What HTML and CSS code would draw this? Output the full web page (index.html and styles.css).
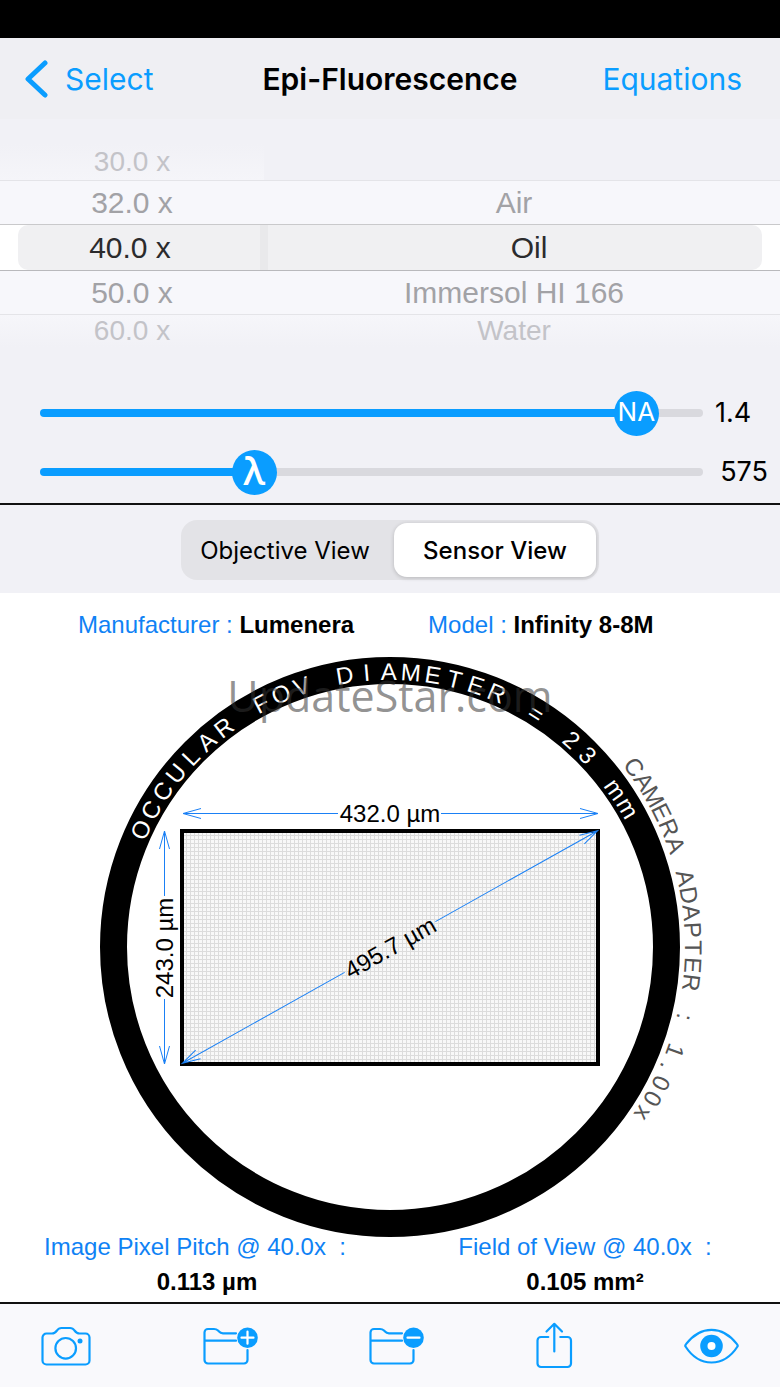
FILE: index.html
```html
<!DOCTYPE html>
<html lang="en">
<head>
    <meta charset="UTF-8">
    <meta name="viewport" content="width=device-width, initial-scale=1.0">
    <title>Epi-Fluorescence</title>
    <link rel="stylesheet" href="styles.css">
</head>
<body>
    <div class="status-bar"></div>

    <header class="navbar">
        <a class="nav-link nav-back" href="#select">
            <svg width="24" height="38" viewBox="0 0 24 38" aria-hidden="true">
                <path d="M20 3 L3 19 L20 35"/>
            </svg>
            Select
        </a>
        <h1>Epi-Fluorescence</h1>
        <a class="nav-link nav-right" href="#equations">Equations</a>
    </header>

    <main>
        <div class="picker">
            <div class="wheel wheel-power" role="radiogroup" aria-label="Magnification">
                <label class="option far"><input type="radio" name="power">30.0 x</label>
                <label class="option near"><input type="radio" name="power">32.0 x</label>
                <label class="option current"><input type="radio" name="power" checked><span>40.0 x</span></label>
                <label class="option near"><input type="radio" name="power">50.0 x</label>
                <label class="option far last"><input type="radio" name="power">60.0 x</label>
            </div>
            <div class="wheel wheel-medium" role="radiogroup" aria-label="Immersion medium">
                <div class="option far empty"></div>
                <label class="option near"><input type="radio" name="medium">Air</label>
                <label class="option current"><input type="radio" name="medium" checked><span>Oil</span></label>
                <label class="option near"><input type="radio" name="medium">Immersol HI 166</label>
                <label class="option far last"><input type="radio" name="medium">Water</label>
            </div>
        </div>

        <div class="sliders">
            <div class="slider-row">
                <div class="slider">
                    <input type="range" id="na" min="0.1" max="1.5" step="0.01" value="1.4">
                    <label class="knob" for="na">NA</label>
                </div>
                <output for="na">1.4</output>
            </div>
            <div class="slider-row">
                <div class="slider">
                    <input type="range" id="lambda" min="420" max="920" step="1" value="575">
                    <label class="knob knob-lambda" for="lambda">λ</label>
                </div>
                <output class="align-right" for="lambda">575</output>
            </div>
        </div>

        <div class="view-switch">
            <div class="segmented">
                <button type="button">Objective View</button>
                <button type="button" class="active">Sensor View</button>
            </div>
        </div>

        <section class="sensor">
            <div class="camera-info">
                <p><span>Manufacturer :</span> <b>Lumenera</b></p>
                <p><span>Model :</span> <b>Infinity 8-8M</b></p>
            </div>

            <svg class="diagram" viewBox="-390 -306 780 588">
                <defs>
                    <pattern id="pixels" width="4" height="4" patternUnits="userSpaceOnUse">
                        <rect class="pixel-fill" width="4" height="4"/>
                        <path class="pixel-line" d="M0 0.5 H4 M0.5 0 V4"/>
                    </pattern>
                </defs>

                <circle class="ring" r="276.5"/>
                <text class="arc-text ring-text" data-radius="267" data-start="-64.8" data-step="4.61">OCCULAR FOV DIAMETER = 23 mm</text>
                <text class="arc-text adapter-text" data-radius="295" data-start="53.6" data-step="3.32">CAMERA ADAPTER : 1.00x</text>

                <rect class="chip" x="-208" y="-116" width="416" height="233" fill="url(#pixels)"/>

                <!-- width -->
                <path class="dim" d="M-52 -133.5 H-207 M-189 -138.5 L-207 -133.5 L-189 -128.5 M51 -133.5 H208 M190 -138.5 L208 -133.5 L190 -128.5"/>
                <text class="dim-text" y="-125">432.0 µm</text>

                <!-- height -->
                <path class="dim" d="M-225.5 -51 V-116 M-230.5 -98 L-225.5 -116 L-220.5 -98 M-225.5 52 V117 M-230.5 99 L-225.5 117 L-220.5 99"/>
                <text class="dim-text" transform="translate(-217 1) rotate(-90)">243.0 µm</text>

                <!-- diagonal -->
                <g transform="rotate(-29.25)">
                    <path class="dim" d="M-52 0 H-238 M-220 -5 L-238 0 L-220 5 M52 0 H238 M220 -5 L238 0 L220 5"/>
                    <text class="dim-text" y="9">495.7 µm</text>
                </g>

                <text class="watermark" y="-235">UpdateStar.com</text>
            </svg>

            <dl class="readouts">
                <div class="readout readout-pitch">
                    <dt>Image Pixel Pitch @ 40.0x  :</dt>
                    <dd>0.113 µm</dd>
                </div>
                <div class="readout">
                    <dt>Field of View @ 40.0x  :</dt>
                    <dd>0.105 mm²</dd>
                </div>
            </dl>
        </section>
    </main>

    <footer class="toolbar">
        <button type="button" aria-label="Camera">
            <svg width="50" height="40" viewBox="0 0 50 40">
                <path d="M5.5 7.5 H11 C13.5 7.5 14.5 6.5 16 4.5 C17.3 2.5 18.5 2 20.5 2 H29 C31 2 32.2 2.5 33.5 4.5 C35 6.5 36 7.5 38.5 7.5 H44.5 A4 4 0 0 1 48.5 11.5 V34.5 A4 4 0 0 1 44.5 38.5 H5.5 A4 4 0 0 1 1.5 34.5 V11.5 A4 4 0 0 1 5.5 7.5 Z"/>
                <circle cx="24.7" cy="22.3" r="10.3"/>
                <circle class="solid" cx="39" cy="15" r="2.5"/>
            </svg>
        </button>
        <button type="button" aria-label="Add to folder">
            <svg width="55" height="40" viewBox="0 0 55 40">
                <path d="M33 7.3 H20 C17 7.3 16.5 6 15 4.5 C13.7 3.3 13 3 11 3 H5 A3.5 3.5 0 0 0 1.5 6.5 V34 A3.5 3.5 0 0 0 5 37.5 H41 A3.5 3.5 0 0 0 44.5 34 V24 M1.5 14.7 H33"/>
                <circle class="solid" cx="44.5" cy="11.7" r="10.3"/>
                <path class="mark" d="M38.5 11.7 H50.5 M44.5 5.7 V17.7"/>
            </svg>
        </button>
        <button type="button" aria-label="Remove from folder">
            <svg width="55" height="40" viewBox="0 0 55 40">
                <path d="M33 7.3 H20 C17 7.3 16.5 6 15 4.5 C13.7 3.3 13 3 11 3 H5 A3.5 3.5 0 0 0 1.5 6.5 V34 A3.5 3.5 0 0 0 5 37.5 H41 A3.5 3.5 0 0 0 44.5 34 V24 M1.5 14.7 H33"/>
                <circle class="solid" cx="44.5" cy="11.7" r="10.3"/>
                <path class="mark" d="M38.5 11.7 H50.5"/>
            </svg>
        </button>
        <button type="button" aria-label="Share">
            <svg width="37" height="48" viewBox="0 0 37 48">
                <path d="M12.3 15 H5 A3.5 3.5 0 0 0 1.5 18.5 V41.5 A3.5 3.5 0 0 0 5 45 H31.5 A3.5 3.5 0 0 0 35 41.5 V18.5 A3.5 3.5 0 0 0 31.5 15 H24.3 M18.3 29.5 V2 M10.5 9.5 L18.3 1.8 L26 9.5"/>
            </svg>
        </button>
        <button type="button" aria-label="Preview">
            <svg width="55" height="36" viewBox="0 0 55 36">
                <path d="M1.5 18.5 C1 17.7 1.3 17 2 16.2 C9 7 18 1.8 27.5 1.8 C37 1.8 46 7 53 16.2 C53.7 17 54 17.7 53.5 18.5 C47 28.5 38 34.5 27.5 34.5 C17 34.5 8 28.5 1.5 18.5 Z"/>
                <circle class="solid" cx="27.5" cy="18" r="11.3"/>
                <circle class="hole" cx="27.5" cy="18" r="4"/>
            </svg>
        </button>
    </footer>

    <script src="script.js"></script>
</body>
</html>
```
FILE: styles.css
```css
* {
    box-sizing: border-box;
}
body {
    margin: 0;
    min-height: 100vh;
    display: flex;
    flex-direction: column;
    background-color: #f1f1f6;
    color: #000;
    font-family: Inter, "Liberation Sans", sans-serif;
}
h1, p, dl, dd {
    margin: 0;
}
button {
    border: none;
    padding: 0;
    background: none;
    font: inherit;
    color: inherit;
    cursor: pointer;
}
.status-bar {
    height: 38px;
    background-color: #000;
}

/* navigation */
.navbar {
    display: grid;
    grid-template-columns: 1fr auto 1fr;
    align-items: center;
    height: 81px;
    padding: 0 25px;
    background-color: #efeff3;
}
.navbar h1 {
    font-size: 30px;
    font-weight: 600;
}
.nav-link {
    color: #0a9dff;
    font-size: 30px;
    text-decoration: none;
}
.nav-back {
    display: flex;
    align-items: center;
    gap: 16px;
}
.nav-back svg {
    fill: none;
    stroke: #0a9dff;
    stroke-width: 5;
    stroke-linecap: round;
    stroke-linejoin: round;
}
.nav-right {
    justify-self: end;
    padding-right: 13px;
}

/* wheel picker */
.picker {
    display: grid;
    grid-template-columns: 264px 1fr;
    padding-top: 25px;
    font-family: "Liberation Sans", Arial, sans-serif;
}
.option {
    position: relative;
    display: flex;
    align-items: center;
    justify-content: center;
    font-size: 30px;
    cursor: pointer;
}
.option input {
    position: absolute;
    opacity: 0;
}
.wheel-medium .option {
    padding-right: 16px;
}
.far {
    height: 36px;
    font-size: 28px;
    color: #c3c3c8;
    background: linear-gradient(#f1f1f6, #f5f5f9);
}
.far.empty {
    background: none;
}
.far.last {
    height: 33px;
    border-top: 1px solid #e4e4e8;
    background: linear-gradient(#f6f6fa, #f1f1f6);
}
.near {
    height: 43px;
    color: #a2a2a6;
    background-color: #f7f7fb;
}
.far + .near {
    height: 44px;
    border-top: 1px solid #e4e4e8;
}
.wheel .option.current {
    height: 47px;
    padding: 0;
    border-top: 1px solid #c9c9cb;
    border-bottom: 1px solid #b9b9bc;
    color: #2b2b2d;
    background-color: #fff;
}
.current span {
    flex: 1;
    height: 45px;
    line-height: 45px;
    text-align: center;
    background-color: #f0f0f2;
}
.wheel-power .current span {
    margin-left: 18px;
    padding-right: 18px;
    border-radius: 10px 0 0 10px;
    border-right: 4px solid #e9e9eb;
}
.wheel-medium .current span {
    margin-right: 18px;
    padding-left: 28px;
    border-radius: 0 10px 10px 0;
    border-left: 4px solid #e9e9eb;
}

/* sliders */
.sliders {
    display: grid;
    gap: 14px;
    padding: 43px 12px 9px 40px;
    border-bottom: 2px solid #111;
}
.slider-row {
    display: flex;
    align-items: center;
}
.slider {
    --pos: 0;
    --knob: 45px;
    position: relative;
    flex: 1;
    height: 45px;
}
.slider input {
    display: block;
    width: 100%;
    height: 100%;
    margin: 0;
    appearance: none;
    background: none;
}
.slider input::-webkit-slider-runnable-track {
    height: 8px;
    border-radius: 4px;
    background: linear-gradient(#0a9dff, #0a9dff) 0 0 / calc(22px + var(--pos) * (100% - var(--knob))) 100% no-repeat #d9d9de;
}
.slider input::-webkit-slider-thumb {
    appearance: none;
    width: 45px;
    height: 45px;
    margin-top: -18px;
    border-radius: 50%;
    background-color: #0a9dff;
}
.knob {
    position: absolute;
    top: 0;
    left: calc(var(--pos) * (100% - var(--knob)));
    width: 45px;
    color: #fff;
    font-size: 26px;
    line-height: 43px;
    text-align: center;
    pointer-events: none;
}
.knob-lambda {
    font-family: "Open Sans", "Noto Sans", sans-serif;
    font-size: 38px;
    font-weight: 600;
}
.slider-row output {
    width: 65px;
    padding-left: 12px;
    font-size: 27px;
}
.slider-row .align-right {
    text-align: right;
}

/* segmented control */
.view-switch {
    display: flex;
    justify-content: center;
    padding: 15px 0 13px;
}
.segmented {
    display: flex;
    gap: 8px;
    padding: 3px;
    border-radius: 16px;
    background-color: #e3e3e7;
}
.segmented button {
    width: 202px;
    height: 54px;
    border-radius: 13px;
    font-size: 24px;
}
.segmented .active {
    background-color: #fff;
    font-weight: 500;
    box-shadow: 0 1px 4px rgba(0, 0, 0, 0.2);
}

/* sensor view */
.sensor {
    padding: 16px 0 3px;
    border-bottom: 2px solid #111;
    background-color: #fff;
    font-family: "Liberation Sans", Arial, sans-serif;
    font-size: 24px;
}
.camera-info {
    display: flex;
    gap: 74px;
    padding-left: 78px;
    line-height: 32px;
}
.camera-info span, .readout dt {
    color: #0f82f5;
}
.diagram {
    display: block;
    width: 100%;
    overflow: visible;
}
.ring {
    fill: none;
    stroke: #000;
    stroke-width: 27;
}
.arc-text {
    font-size: 24px;
}
.ring-text {
    fill: #fff;
}
.adapter-text {
    fill: #555;
}
.pixel-fill {
    fill: #f8f8f8;
}
.pixel-line {
    fill: none;
    stroke: #dcdcdc;
    stroke-width: 1;
}
.chip {
    stroke: #000;
    stroke-width: 4;
}
.dim {
    fill: none;
    stroke: #1a80f5;
    stroke-width: 1;
}
.dim-text {
    font-size: 24px;
    text-anchor: middle;
}
.watermark {
    fill: #343434;
    fill-opacity: 0.54;
    font-family: "Open Sans", "Noto Sans", sans-serif;
    font-size: 43px;
    text-anchor: middle;
}
.readouts {
    position: relative;
    display: grid;
    grid-template-columns: 1fr 1fr;
    line-height: 35px;
    text-align: center;
}
.readout dt {
    white-space: pre;
}
.readout dd {
    font-weight: bold;
}
.readout-pitch dd {
    padding-left: 24px;
}

/* toolbar */
.toolbar {
    flex: 1;
    display: flex;
    align-items: center;
    justify-content: space-between;
    min-height: 83px;
    padding: 0 41px;
    background-color: #f9f9fc;
}
.toolbar svg {
    display: block;
    fill: none;
    stroke: #0a9dff;
    stroke-width: 2.2;
    stroke-linecap: round;
    stroke-linejoin: round;
}
.toolbar .solid {
    fill: #0a9dff;
    stroke: none;
}
.toolbar .hole {
    fill: #fff;
    stroke: none;
}
.toolbar .mark {
    stroke: #fff;
}
```
FILE: script.js
```js
// Spread the letters of a label evenly round the ring
document.querySelectorAll('.arc-text').forEach((text) => {
    const radius = Number(text.dataset.radius);
    const start = Number(text.dataset.start);
    const step = Number(text.dataset.step);
    const xs = [];
    const ys = [];
    const turns = [];

    for (let i = 0; i < text.textContent.length; i++) {
        const half = text.getSubStringLength(i, 1) / 2;
        const deg = start + i * step;
        const rad = deg * Math.PI / 180;
        xs.push((radius * Math.sin(rad) - half * Math.cos(rad)).toFixed(1));
        ys.push((-radius * Math.cos(rad) - half * Math.sin(rad)).toFixed(1));
        turns.push(deg.toFixed(1));
    }

    text.setAttribute('x', xs.join(' '));
    text.setAttribute('y', ys.join(' '));
    text.setAttribute('rotate', turns.join(' '));
});

// Keep the knob and the readout with the slider value
document.querySelectorAll('.slider-row').forEach((row) => {
    const slider = row.querySelector('.slider');
    const input = row.querySelector('input');
    const output = row.querySelector('output');

    const update = () => {
        slider.style.setProperty('--pos', (input.value - input.min) / (input.max - input.min));
        output.textContent = input.value;
    };

    input.addEventListener('input', update);
    update();
});

// Segmented control
const segments = document.querySelectorAll('.segmented button');
segments.forEach((button) => {
    button.addEventListener('click', () => {
        segments.forEach((other) => other.classList.toggle('active', other === button));
    });
});
```
